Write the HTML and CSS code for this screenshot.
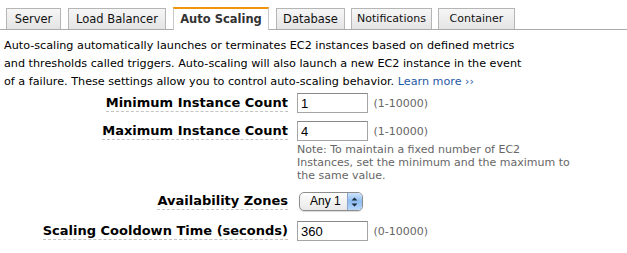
FILE: index.html
```html
<!DOCTYPE html>
<html lang="en">
<head>
    <meta charset="UTF-8">
    <title>Auto Scaling</title>
    <link rel="stylesheet" href="styles.css">
</head>
<body>
    <div class="tabs">
        <div class="tab server">Server</div>
        <div class="tab balancer">Load Balancer</div>
        <div class="tab scaling active">Auto Scaling</div>
        <div class="tab database">Database</div>
        <div class="tab notifications">Notifications</div>
        <div class="tab container">Container</div>
    </div>

    <p class="intro">
        Auto-scaling automatically launches or terminates EC2 instances based on defined metrics
        and thresholds called triggers. Auto-scaling will also launch a new EC2 instance in the event
        of a failure. These settings allow you to control auto-scaling behavior.
        <a href="#">Learn more &rsaquo;&rsaquo;</a>
    </p>

    <div class="form">
        <div class="row">
            <div class="label"><span>Minimum Instance Count</span></div>
            <div class="field">
                <input type="text" value="1"> <span class="hint">(1-10000)</span>
            </div>
        </div>
        <div class="row">
            <div class="label"><span>Maximum Instance Count</span></div>
            <div class="field">
                <input type="text" value="4"> <span class="hint">(1-10000)</span>
                <div class="note">Note: To maintain a fixed number of EC2<br>Instances, set the minimum and the maximum to the same value.</div>
            </div>
        </div>
        <div class="row zones">
            <div class="label"><span>Availability Zones</span></div>
            <div class="field">
                <div class="select">
                    <span class="select-text">Any 1</span>
                    <span class="select-arrows">
                        <svg width="7" height="10" viewBox="0 0 7 10">
                            <path d="M3.5 0.5 L6.5 3.5 L0.5 3.5 Z M0.5 6.5 L6.5 6.5 L3.5 9.5 Z" fill="#1b2a3a"/>
                        </svg>
                    </span>
                </div>
            </div>
        </div>
        <div class="row">
            <div class="label"><span>Scaling Cooldown Time (seconds)</span></div>
            <div class="field">
                <input type="text" value="360"> <span class="hint">(0-10000)</span>
            </div>
        </div>
    </div>
</body>
</html>
```

FILE: styles.css
```css
body {
    margin: 0;
    font-family: 'DejaVu Sans', Verdana, sans-serif;
    font-size: 11.2px;
    color: #000;
    background-color: #fff;
}

/* tab strip */
.tabs {
    display: flex;
    align-items: flex-end;
    padding: 7px 0 0 6px;
    border-bottom: 1px solid #aaa;
}

.tab {
    box-sizing: border-box;
    height: 21px;
    line-height: 20px;
    margin-right: 7px;
    text-align: center;
    font-size: 11.5px;
    color: #111;
    background: linear-gradient(#f6f6f6, #e4e4e4);
    border: 1px solid #b5b5b5;
    border-bottom: none;
}

.tab.server { width: 55px; }
.tab.balancer { width: 98px; }
.tab.scaling { width: 96px; }
.tab.database { width: 69px; margin-right: 6px; }
.tab.notifications { width: 81px; font-size: 11px; margin-right: 6px; }
.tab.container { width: 77px; font-size: 11px; }

.tab.active {
    height: 23px;
    line-height: 20px;
    font-weight: bold;
    color: #333;
    background: #fff;
    border-color: #c8c8c8;
    border-top: 2px solid #f0950c;
    margin-bottom: -1px;
}

.intro {
    width: 528px;
    margin: 7px 0 0 4px;
    line-height: 18px;
}

.intro a {
    color: #1f5aa6;
    text-decoration: none;
}

/* settings form */
.form {
    margin-top: 2px;
}

.row {
    display: grid;
    grid-template-columns: 288px 1fr;
    column-gap: 9px;
    margin-bottom: 8px;
}

.label {
    text-align: right;
    font-weight: bold;
    font-size: 13px;
    padding-top: 2px;
}

.label span {
    border-bottom: 1px dashed #c4c4c4;
    padding-bottom: 1px;
}

.field input {
    width: 63px;
    height: 14px;
    padding: 2px 3px;
    border: 1px solid #a5a5a5;
    border-top-color: #888;
    font-family: 'Liberation Sans', Arial, sans-serif;
    font-size: 13px;
    margin: 0;
    vertical-align: middle;
}

.hint {
    font-size: 11px;
    color: #666;
    margin-left: 2px;
    vertical-align: middle;
}

.note {
    font-size: 11px;
    color: #666;
    line-height: 13px;
    width: 290px;
    margin-top: 2px;
    margin-bottom: 1px;
}

.zones {
    margin-bottom: 10px;
}

.select {
    display: inline-flex;
    align-items: stretch;
    height: 17px;
    border: 1px solid #8d8d8d;
    border-radius: 5px;
    background: linear-gradient(#fdfdfd, #e8e8e8);
    box-shadow: 0 1px 1px rgba(0, 0, 0, 0.15);
    margin: 1px 0 0 2px;
    overflow: hidden;
    font-family: 'Liberation Sans', Arial, sans-serif;
    font-size: 12px;
}

.select-text {
    padding: 0 6px 0 10px;
    line-height: 17px;
}

.select-arrows {
    width: 14px;
    display: flex;
    align-items: center;
    justify-content: center;
    background: linear-gradient(#cfe3fb, #8fbdf2 50%, #b7d6fa);
    border-left: 1px solid #8aa4c7;
}
```
